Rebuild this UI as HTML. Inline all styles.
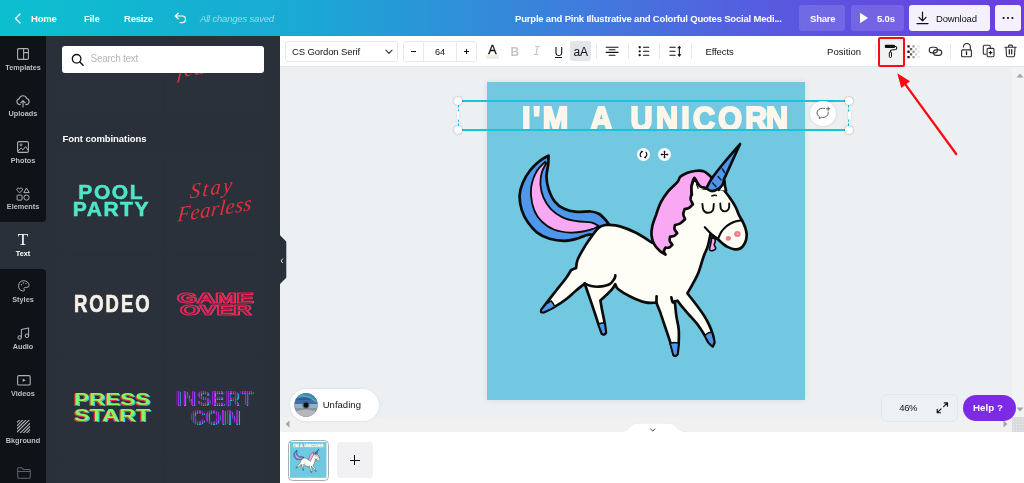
<!DOCTYPE html>
<html lang="en">
<head>
<meta charset="utf-8">
<title>Canva editor</title>
<style>
*{box-sizing:border-box;margin:0;padding:0}
html,body{width:1024px;height:483px;overflow:hidden;background:#fff}
body{font-family:"Liberation Sans",sans-serif;position:relative;color:#0e1318}
body>*{will-change:transform}
.abs{position:absolute}
/* header */
#hdr{left:0;top:0;width:1024px;height:36px;background:linear-gradient(90deg,#0cc0cf 0%,#1aa8d4 30%,#3d7fdc 55%,#5b55e0 78%,#6a3fe0 100%);color:#fff;font-weight:bold;font-size:9.5px;letter-spacing:-.19px}
#hdr .t{position:absolute;top:12px;line-height:13px;white-space:nowrap}
.hbtn{position:absolute;top:5px;height:26px;border-radius:3px;background:rgba(255,255,255,.13)}
/* nav */
#nav{left:0;top:36px;width:46px;height:447px;background:#293039}
.navd{position:absolute;left:0;width:46px;background:#0e1318}
.nl{position:absolute;left:0;width:46px;text-align:center;font-size:7.3px;font-weight:bold;color:#bcbfc3;line-height:9px;white-space:nowrap}
.ni{position:absolute;overflow:visible}
/* panel */
#panel{left:46px;top:36px;width:234px;height:447px;background:#293039;overflow:hidden}
.tile{position:absolute;width:98px;height:97px;border-radius:4px;background:#2a313a}
.fc{position:absolute;font-weight:bold;white-space:nowrap}
.go{font-size:14px;line-height:14px;color:#2b323b;-webkit-text-stroke:1.1px #ea2450;text-shadow:-.7px 0 #c81ccc,.7px 0 #28c6e6}
.ps{font-size:16.8px;line-height:17px;color:#8df65c;text-shadow:-.9px .5px #e0304c,.9px .5px #2ad0e6}
.ic{font-size:20px;line-height:20px;color:#a423da;text-shadow:1.2px .6px #1fb4d8}
.ic::after{content:"";position:absolute;left:-2px;right:-3px;top:0;bottom:0;background:repeating-linear-gradient(90deg,rgba(43,50,59,0) 0 1.3px,rgba(43,50,59,.8) 1.3px 2.3px)}
/* toolbar */
#tb{left:280px;top:36px;width:744px;height:31px;background:#fff;border-bottom:1px solid #e3e6ea}
.box{position:absolute;top:5px;height:21px;border:1px solid #e6e8eb;border-radius:3px;background:#fff}
.tt{position:absolute;top:10px;line-height:12px;font-size:9.5px;white-space:nowrap;color:#0e1318}
.dv{position:absolute;top:7.5px;width:1px;height:15.5px;background:#e6e8eb}
/* canvas */
#cv{left:280px;top:67px;width:744px;height:350px;background:#edf0f3}
#page{left:206.7px;top:15.2px;width:317.9px;height:318.3px;background:#72c8e0;box-shadow:0 0 6px rgba(30,40,50,.10)}
.hd{position:absolute;width:8px;height:8px;margin:.3px;border-radius:50%;background:#fff;box-shadow:0 0 2px rgba(0,0,0,.4)}
/* bottom */
#btm{left:280px;top:431.6px;width:744px;height:51.4px;background:#fff}
</style>
</head>
<body>
<!-- HEADER -->
<div id="hdr" class="abs">
  <svg class="abs" style="left:14px;top:13px" width="8" height="11" viewBox="0 0 8 11"><path d="M6 1 L1.5 5.5 L6 10" fill="none" stroke="#fff" stroke-width="1.3" stroke-linecap="round" stroke-linejoin="round"/></svg>
  <span class="t" style="left:31px">Home</span>
  <span class="t" style="left:84px">File</span>
  <span class="t" style="left:124px">Resize</span>
  <svg class="abs" style="left:174px;top:12px" width="13" height="12" viewBox="0 0 13 12"><path d="M4.2 1.2 L1.2 4 L4.2 6.8 M1.5 4 H8.2 A3.3 3.3 0 0 1 8.2 10.6 H6" fill="none" stroke="#fff" stroke-width="1.2" stroke-linecap="round" stroke-linejoin="round"/></svg>
  <span class="t" style="left:200px;font-weight:normal;font-style:italic;color:rgba(255,255,255,.55)">All changes saved</span>
  <span class="t" style="left:515px">Purple and Pink Illustrative and Colorful Quotes Social Medi...</span>
  <div class="hbtn" style="left:799px;width:46px"><span class="t" style="left:11px;top:7px">Share</span></div>
  <div class="hbtn" style="left:851px;width:53px">
    <svg class="abs" style="left:8px;top:7px" width="10" height="12" viewBox="0 0 10 12"><path d="M1 0.8 L9 6 L1 11.2 Z" fill="#fff"/></svg>
    <span class="t" style="left:26px;top:7px">5.0s</span>
  </div>
  <div class="hbtn" style="left:909px;width:81px;background:#f4f1fd;color:#0e1318">
    <svg class="abs" style="left:7px;top:6px" width="13" height="14" viewBox="0 0 13 14"><path d="M6.5 1 V9.5 M3 6.3 L6.5 9.8 L10 6.3 M1 12.6 H12" fill="none" stroke="#0e1318" stroke-width="1.2" stroke-linecap="round" stroke-linejoin="round"/></svg>
    <span class="t" style="left:27px;top:7px;font-weight:normal">Download</span>
  </div>
  <div class="hbtn" style="left:995px;width:26px;background:#f4f1fd">
    <svg class="abs" style="left:7px;top:11px" width="12" height="4" viewBox="0 0 12 4"><circle cx="1.6" cy="2" r="1.1" fill="#0e1318"/><circle cx="6" cy="2" r="1.1" fill="#0e1318"/><circle cx="10.4" cy="2" r="1.1" fill="#0e1318"/></svg>
  </div>
</div>

<!-- NAV -->
<div id="nav" class="abs">
  <div class="navd" style="top:0;height:186px;border-bottom-right-radius:4px"></div>
  <div class="navd" style="top:233px;height:214px;border-top-right-radius:4px"></div>
    <!-- Templates -->
  <svg class="ni" style="left:17px;top:12px" width="12" height="12" viewBox="0 0 12 12"><rect x="0.6" y="0.6" width="10.8" height="10.8" rx="1.2" fill="none" stroke="#adb1b5" stroke-width="1.1"/><path d="M6.6 0.6 V11.4 M6.6 4.6 H11.4" fill="none" stroke="#adb1b5" stroke-width="1.1"/></svg>
  <div class="nl" style="top:26.5px">Templates</div>
  <!-- Uploads -->
  <svg class="ni" style="left:16px;top:57.5px" width="14" height="14" viewBox="0 0 14 14"><path d="M4.2 10.6 H3.6 A3 3 0 0 1 3.2 4.7 A3.9 3.9 0 0 1 10.7 4.5 A3.1 3.1 0 0 1 10.4 10.6 H9.8" fill="none" stroke="#adb1b5" stroke-width="1.1" stroke-linecap="round"/><path d="M7 13 V7 M4.8 8.9 L7 6.7 L9.2 8.9" fill="none" stroke="#adb1b5" stroke-width="1.1" stroke-linecap="round" stroke-linejoin="round"/></svg>
  <div class="nl" style="top:73px">Uploads</div>
  <!-- Photos -->
  <svg class="ni" style="left:17px;top:104.5px" width="12" height="12" viewBox="0 0 12 12"><rect x="0.6" y="0.6" width="10.8" height="10.8" rx="1.4" fill="none" stroke="#adb1b5" stroke-width="1.1"/><circle cx="4" cy="3.9" r="1" fill="none" stroke="#adb1b5" stroke-width="0.9"/><path d="M0.8 10.4 L4.2 7 L6 8.8 L8.6 5.6 L11.2 9.4" fill="none" stroke="#adb1b5" stroke-width="1" stroke-linejoin="round"/></svg>
  <div class="nl" style="top:119.7px">Photos</div>
  <!-- Elements -->
  <svg class="ni" style="left:16px;top:150.5px" width="14" height="14" viewBox="0 0 14 14"><path d="M3.7 5.6 C1.6 4.2 0.7 3.2 0.9 2.1 C1.1 0.9 2.8 0.6 3.7 1.9 C4.6 0.6 6.3 0.9 6.5 2.1 C6.7 3.2 5.8 4.2 3.7 5.6 Z" fill="none" stroke="#adb1b5" stroke-width="1" stroke-linejoin="round"/><path d="M10.5 1 L13.2 5.6 H7.8 Z" fill="none" stroke="#adb1b5" stroke-width="1" stroke-linejoin="round"/><rect x="1.1" y="8.1" width="5" height="5" rx="0.6" fill="none" stroke="#adb1b5" stroke-width="1"/><circle cx="10.5" cy="10.6" r="2.6" fill="none" stroke="#adb1b5" stroke-width="1"/></svg>
  <div class="nl" style="top:166px">Elements</div>
  <!-- Text -->
  <div class="abs" style="left:0;width:46px;top:195.4px;text-align:center;font-family:'Liberation Serif',serif;font-size:17px;line-height:18px;color:#fff">T</div>
  <div class="nl" style="top:212.5px;color:#fff">Text</div>
  <!-- Styles -->
  <svg class="ni" style="left:17.8px;top:244.4px" width="12" height="12" viewBox="0 0 13 13"><path d="M6.3 0.8 A5.6 5.6 0 0 0 5.2 11.9 C6.9 12.3 7.4 11.2 6.7 10.2 C6 9.1 6.6 8 7.9 8 H9.7 A2.3 2.3 0 0 0 12 5.7 C11.8 2.7 9.3 0.8 6.3 0.8 Z" fill="none" stroke="#adb1b5" stroke-width="1.05" stroke-linejoin="round"/><circle cx="3.7" cy="5.2" r="0.75" fill="#adb1b5"/><circle cx="5.8" cy="3.3" r="0.75" fill="#adb1b5"/><circle cx="8.6" cy="3.7" r="0.75" fill="#adb1b5"/></svg>
  <div class="nl" style="top:259px">Styles</div>
  <!-- Audio -->
  <svg class="ni" style="left:16.5px;top:290.5px" width="13" height="13" viewBox="0 0 13 13"><path d="M4.4 10.2 V2.6 L11.6 0.9 V8.6" fill="none" stroke="#adb1b5" stroke-width="1.05" stroke-linejoin="round" stroke-linecap="round"/><circle cx="2.7" cy="10.4" r="1.7" fill="none" stroke="#adb1b5" stroke-width="1.05"/><circle cx="9.9" cy="8.7" r="1.7" fill="none" stroke="#adb1b5" stroke-width="1.05"/></svg>
  <div class="nl" style="top:305.5px">Audio</div>
  <!-- Videos -->
  <svg class="ni" style="left:16.5px;top:338.5px" width="14" height="11" viewBox="0 0 14 11"><rect x="0.6" y="0.6" width="12.6" height="9.4" rx="1.3" fill="none" stroke="#adb1b5" stroke-width="1.1"/><path d="M5.7 3.5 L8.7 5.3 L5.7 7.1 Z" fill="#adb1b5"/></svg>
  <div class="nl" style="top:353px">Videos</div>
  <!-- Bkground -->
  <svg class="ni" style="left:17px;top:383.5px" width="13" height="13" viewBox="0 0 13 13"><defs><clipPath id="bkc"><rect x="0" y="0" width="13" height="13" rx="1"/></clipPath></defs><g clip-path="url(#bkc)" stroke="#adb1b5" stroke-width="1.1"><path d="M-1 3.5 L3.5 -1 M-1 6.7 L6.7 -1 M-1 9.9 L9.9 -1 M-1 13.1 L13.1 -1 M2.2 14 L14 2.2 M5.4 14 L14 5.4 M8.6 14 L14 8.6 M11.8 14 L14 11.8"/></g></svg>
  <div class="nl" style="top:399.8px">Bkground</div>
  <!-- Folder -->
  <svg class="ni" style="left:16.5px;top:430.5px;opacity:.5" width="14" height="12" viewBox="0 0 14 12"><path d="M0.7 10.3 V1.8 A1 1 0 0 1 1.7 0.8 H4.8 L6.4 2.4 H12.3 A1 1 0 0 1 13.3 3.4 V10.3 A1 1 0 0 1 12.3 11.3 H1.7 A1 1 0 0 1 0.7 10.3 Z M0.7 4.4 H13.3" fill="none" stroke="#adb1b5" stroke-width="1.05" stroke-linejoin="round"/></svg>

</div>

<!-- PANEL -->
<div id="panel" class="abs">
    <!-- hidden-above tiles -->
  <div class="tile" style="left:16.5px;top:-20.7px"></div>
  <div class="tile" style="left:120.3px;top:-20.7px"></div>
  <div class="abs" style="left:131px;top:24px;font:italic 22px/22px 'Liberation Serif',serif;color:#dc2f3c;transform:rotate(-9deg) skewX(-14deg);transform-origin:0 100%;white-space:nowrap;letter-spacing:.4px">fear</div>
  <div class="abs" style="left:0;top:0;width:234px;height:24px;background:#293039"></div>
  <!-- search -->
  <div class="abs" style="left:16px;top:10.3px;width:202.2px;height:26.3px;background:#fff;border-radius:3px"></div>
  <svg class="abs" style="left:25px;top:17px" width="14" height="14" viewBox="0 0 14 14"><circle cx="5.6" cy="5.8" r="4.3" fill="none" stroke="#0e1318" stroke-width="1.3"/><path d="M8.8 9 L12.1 12.3" stroke="#0e1318" stroke-width="1.4" stroke-linecap="round"/></svg>
  <span class="abs" style="left:44.5px;top:17px;font-size:10px;line-height:12px;color:#b3b7bc;letter-spacing:-.29px;white-space:nowrap">Search text</span>
  <div class="abs" style="left:16.5px;top:96.5px;font-size:9.5px;line-height:12px;font-weight:bold;color:#fff;letter-spacing:-.06px;white-space:nowrap">Font combinations</div>
  <!-- row 1 -->
  <div class="tile" style="left:16.5px;top:117px"></div>
  <div class="tile" style="left:120.3px;top:117px"></div>
  <div class="fc" style="left:32.3px;top:145.3px;font-size:21px;line-height:21px;color:#4fe6c6;-webkit-text-stroke:.6px #4fe6c6;letter-spacing:1.6px">POOL</div>
  <div class="fc" style="left:26.8px;top:162.2px;font-size:21px;line-height:21px;color:#4fe6c6;-webkit-text-stroke:.6px #4fe6c6;letter-spacing:1.5px">PARTY</div>
  <div class="abs" style="left:128px;top:140px;width:90px;height:50px;transform:rotate(-9deg);transform-origin:50% 50%">
    <div class="abs" style="left:18px;top:0;font:italic 21px/22px 'Liberation Serif',serif;color:#e0303c;letter-spacing:2.2px;white-space:nowrap;transform:skewX(-14deg)">Stay</div>
    <div class="abs" style="left:2px;top:21px;font:italic 21px/22px 'Liberation Serif',serif;color:#e0303c;letter-spacing:.4px;white-space:nowrap;transform:skewX(-14deg)">Fearless</div>
  </div>
  <!-- row 2 -->
  <div class="tile" style="left:16.5px;top:220.3px"></div>
  <div class="tile" style="left:120.3px;top:220.3px"></div>
  <div class="fc" style="left:27.6px;top:256.1px;font-size:23.7px;line-height:24px;color:#f6f0e7;-webkit-text-stroke:.7px #f6f0e7;letter-spacing:2.5px;transform:scaleX(.78);transform-origin:0 0">RODEO</div>
  <div class="fc go" style="left:130.7px;top:255.4px;transform:scaleX(1.82);transform-origin:0 0">GAME</div>
  <div class="fc go" style="left:133.5px;top:267.3px;transform:scaleX(1.80);transform-origin:0 0">OVER</div>
  <!-- row 3 -->
  <div class="tile" style="left:16.5px;top:323.6px"></div>
  <div class="tile" style="left:120.3px;top:323.6px"></div>
  <div class="fc ps" style="left:27.6px;top:355.2px;transform:scaleX(1.34);transform-origin:0 0">PRESS</div>
  <div class="fc ps" style="left:27.6px;top:371.3px;transform:scaleX(1.395);transform-origin:0 0">START</div>
  <div class="fc ic" style="left:129.2px;top:352px;letter-spacing:.78px">INSERT</div>
  <div class="fc ic" style="left:144.3px;top:370.7px">COIN</div>
  <!-- row 4 -->
  <div class="tile" style="left:16.5px;top:427px"></div>
  <div class="tile" style="left:120.3px;top:427px"></div>

</div>

<!-- TOOLBAR -->
<div id="tb" class="abs">
    <!-- font box -->
  <div class="box" style="left:4.5px;width:113.5px"></div>
  <span class="tt" style="left:12px;letter-spacing:-.11px">CS Gordon Serif</span>
  <svg class="abs" style="left:104.5px;top:13px" width="8" height="6" viewBox="0 0 8 6"><path d="M0.9 1.2 L4 4.4 L7.1 1.2" fill="none" stroke="#2a3036" stroke-width="1.1" stroke-linecap="round" stroke-linejoin="round"/></svg>
  <!-- size box -->
  <div class="box" style="left:122.6px;width:74px"></div>
  <div class="abs" style="left:143px;top:5px;width:1px;height:21px;background:#e8eaed"></div>
  <div class="abs" style="left:176px;top:5px;width:1px;height:21px;background:#e8eaed"></div>
  <div class="abs" style="left:131.3px;top:14.8px;width:5px;height:1.2px;background:#0e1318"></div>
  <span class="tt" style="left:155px;font-size:9.2px">64</span>
  <div class="abs" style="left:183.8px;top:14.8px;width:5.4px;height:1.2px;background:#0e1318"></div>
  <div class="abs" style="left:185.9px;top:12.7px;width:1.2px;height:5.4px;background:#0e1318"></div>
  <!-- A color -->
  <span class="tt" style="left:208.2px;top:7px;font-size:12.5px;line-height:14px;-webkit-text-stroke:.35px #0e1318">A</span>
  <div class="abs" style="left:206px;top:18.8px;width:13px;height:4px;border-radius:1.5px;background:#efeee4"></div>
  <!-- B I U aA -->
  <span class="tt" style="left:230.6px;top:9px;font-size:12px;line-height:14px;font-weight:bold;color:#c3c7cc">B</span>
  <span class="tt" style="left:253px;top:8.6px;font-size:12px;line-height:14px;font-style:italic;font-family:'Liberation Mono',monospace;color:#c3c7cc">I</span>
  <span class="tt" style="left:274.6px;top:9px;font-size:12px;line-height:14px">U</span>
  <div class="abs" style="left:274.6px;top:21.2px;width:7.6px;height:1.1px;background:#0e1318"></div>
  <div class="abs" style="left:290px;top:5px;width:20.6px;height:20px;border-radius:3px;background:#e3e5e8"></div>
  <span class="tt" style="left:293.6px;top:9px;font-size:12px;line-height:14px;letter-spacing:-.2px">aA</span>
  <div class="dv" style="left:316px"></div>
  <!-- align -->
  <svg class="abs" style="left:325px;top:9px" width="14" height="13" viewBox="0 0 14 13"><path d="M1.2 2.25 H13 M4.2 4.8 H10 M1.2 7.4 H13 M4.2 10.2 H10" fill="none" stroke="#0e1318" stroke-width="1.1" stroke-linecap="round"/></svg>
  <div class="dv" style="left:347.6px"></div>
  <!-- list -->
  <svg class="abs" style="left:357px;top:9px" width="14" height="13" viewBox="0 0 14 13"><circle cx="2.7" cy="2.25" r="1.15" fill="#0e1318"/><circle cx="2.7" cy="6.3" r="1.15" fill="#0e1318"/><circle cx="2.7" cy="10.2" r="1.15" fill="#0e1318"/><path d="M6.5 2.25 H11.8 M6.5 6.3 H11.8 M6.5 10.2 H11.8" fill="none" stroke="#0e1318" stroke-width="1.1" stroke-linecap="round"/></svg>
  <div class="dv" style="left:379px"></div>
  <!-- spacing -->
  <svg class="abs" style="left:389px;top:9px" width="14" height="13" viewBox="0 0 14 13"><path d="M0.9 2.25 H6.1 M0.9 6.3 H6.1 M0.9 10.2 H6.1" fill="none" stroke="#0e1318" stroke-width="1.1" stroke-linecap="round"/><path d="M10.35 2 V10.6" stroke="#0e1318" stroke-width="1.1"/><path d="M10.35 0.7 L12.4 3.3 H8.3 Z M10.35 11.9 L12.4 9.3 H8.3 Z" fill="#0e1318"/></svg>
  <div class="dv" style="left:411.3px"></div>
  <span class="tt" style="left:425.4px;letter-spacing:-.07px">Effects</span>
  <span class="tt" style="left:547px;letter-spacing:.05px">Position</span>
  <div class="dv" style="left:594.5px"></div>
  <!-- red box + roller -->
  <div class="abs" style="left:597.9px;top:0.6px;width:26.8px;height:30.2px;border:2.8px solid #fb0a12;border-radius:2px;background:#f2f2f2"></div>
  <svg class="abs" style="left:604px;top:8px" width="14" height="15" viewBox="0 0 14 15"><rect x="0.8" y="0.8" width="10.2" height="3.2" rx="1" fill="#0e1318"/><path d="M11 2.4 H11.6 A1.1 1.1 0 0 1 12.7 3.5 V4.3 A1.2 1.2 0 0 1 11.7 5.5 L7.4 6.1 A1.1 1.1 0 0 0 6.4 7.2 V7.8" fill="none" stroke="#0e1318" stroke-width="1.05" stroke-linecap="round"/><rect x="5.3" y="7.9" width="2.2" height="5.6" rx="1.1" fill="none" stroke="#0e1318" stroke-width="1"/></svg>
  <!-- transparency -->
  <svg class="abs" style="left:626.5px;top:8.5px" width="14" height="14" viewBox="0 0 14 14">
    <g>
      <rect x="0.4" y="0.3" width="2.3" height="2.3" rx=".5" fill="#0e1318"/><rect x="0.4" y="5.6" width="2.3" height="2.3" rx=".5" fill="#0e1318"/><rect x="0.4" y="10.9" width="2.3" height="2.3" rx=".5" fill="#0e1318"/>
      <rect x="2.9" y="2.9" width="2.3" height="2.3" rx=".5" fill="#5a5e63"/><rect x="2.9" y="8.2" width="2.3" height="2.3" rx=".5" fill="#5a5e63"/>
      <rect x="5.4" y="0.3" width="2.3" height="2.3" rx=".5" fill="#9a9da1"/><rect x="5.4" y="5.6" width="2.3" height="2.3" rx=".5" fill="#9a9da1"/><rect x="5.4" y="10.9" width="2.3" height="2.3" rx=".5" fill="#9a9da1"/>
      <rect x="7.9" y="2.9" width="2.3" height="2.3" rx=".5" fill="#cdcfd2"/><rect x="7.9" y="8.2" width="2.3" height="2.3" rx=".5" fill="#cdcfd2"/>
      <rect x="10.4" y="0.3" width="2.3" height="2.3" rx=".5" fill="#e6e7e9"/><rect x="10.4" y="5.6" width="2.3" height="2.3" rx=".5" fill="#e6e7e9"/><rect x="10.4" y="10.9" width="2.3" height="2.3" rx=".5" fill="#e6e7e9"/>
    </g>
  </svg>
  <!-- link -->
  <svg class="abs" style="left:648px;top:10px" width="15" height="11" viewBox="0 0 15 11"><rect x="1.2" y="1.2" width="8.3" height="5.6" rx="2.8" fill="none" stroke="#2a2e33" stroke-width="1.15"/><rect x="5.4" y="3.8" width="8.3" height="5.6" rx="2.8" fill="none" stroke="#2a2e33" stroke-width="1.15"/></svg>
  <div class="dv" style="left:670.3px"></div>
  <!-- lock -->
  <svg class="abs" style="left:680px;top:6.5px" width="13" height="15" viewBox="0 0 13 15"><rect x="1.6" y="6.9" width="9.8" height="6.8" rx="1" fill="none" stroke="#2a2e33" stroke-width="1.1"/><path d="M3.4 4 V3.9 A3.5 3.5 0 0 1 10.4 3.9 V6.8" fill="none" stroke="#2a2e33" stroke-width="1.1" stroke-linecap="round"/><path d="M6.5 8.8 V11.6" stroke="#0e1318" stroke-width="1.3" stroke-linecap="round"/></svg>
  <!-- copy -->
  <svg class="abs" style="left:702px;top:8px" width="13" height="14" viewBox="0 0 13 14"><path d="M4.4 10.3 H2.6 A1.3 1.3 0 0 1 1.3 9 V2.6 A1.3 1.3 0 0 1 2.6 1.3 H7 A1.3 1.3 0 0 1 8.3 2.6 V3.9" fill="none" stroke="#2a2e33" stroke-width="1.1"/><rect x="5.1" y="4.4" width="6.9" height="8.3" rx="1.2" fill="#fff" stroke="#2a2e33" stroke-width="1.1"/><path d="M8.55 7.2 V10 M7.15 8.6 H9.95" stroke="#0e1318" stroke-width="1.1" stroke-linecap="round"/></svg>
  <!-- trash -->
  <svg class="abs" style="left:723.8px;top:8px" width="13" height="14" viewBox="0 0 13 14"><path d="M0.8 3.2 H12.2 M4.6 3 V1.9 A0.8 0.8 0 0 1 5.4 1.1 H7.6 A0.8 0.8 0 0 1 8.4 1.9 V3" fill="none" stroke="#2a2e33" stroke-width="1.1" stroke-linecap="round"/><path d="M2 3.4 L2.5 11.6 A1.1 1.1 0 0 0 3.6 12.7 H9.4 A1.1 1.1 0 0 0 10.5 11.6 L11 3.4" fill="none" stroke="#2a2e33" stroke-width="1.1"/><path d="M5.3 5.5 V10 M7.7 5.5 V10" stroke="#0e1318" stroke-width="1.15" stroke-linecap="round"/></svg>

</div>

<!-- h scrollbar -->
<div class="abs" style="left:280px;top:417px;width:744px;height:14.6px;background:#f1f1f2"></div>
<svg class="abs" style="left:284.5px;top:419.8px" width="5" height="8" viewBox="0 0 5 8"><path d="M4.5 0.5 L0.6 4 L4.5 7.5 Z" fill="#a3a5a8"/></svg>
<svg class="abs" style="left:1002.5px;top:419.8px" width="5" height="8" viewBox="0 0 5 8"><path d="M0.5 0.5 L4.4 4 L0.5 7.5 Z" fill="#a3a5a8"/></svg>
<div class="abs" style="left:1012px;top:417px;width:12px;height:14.6px;background-color:#d9dadb;background-image:radial-gradient(circle,#e9eaeb .7px,rgba(233,234,235,0) .9px);background-size:3px 3px"></div>
<!-- CANVAS -->
<div id="cv" class="abs">
  <div id="page" class="abs">
    <!--PAGE-START-->
    <div class="abs" id="ttl" style="left:35.1px;top:20px;font-size:32.6px;line-height:34px;font-weight:bold;color:#fdf6ea;-webkit-text-stroke:2.1px #fdf6ea;letter-spacing:2.64px;word-spacing:6.43px;white-space:nowrap;transform:scaleX(.938);transform-origin:0 0">I'M <span style="margin-left:2.7px">A</span> <span style="letter-spacing:3.45px">UNICOR</span><span style="margin-left:-4.9px">N</span></div>
    <svg class="abs" style="left:0;top:0" width="317.9" height="318.3" viewBox="0 0 317.9 318.3">
<g id="uni" transform="translate(-486.7 -82.2)">
<path d="M600.0 236.0 C598.3 235.8 592.3 234.8 589.7 234.8 C587.1 234.8 586.7 235.2 584.5 235.9 C582.3 236.6 579.8 238.1 576.3 239.0 C572.8 239.9 568.3 241.1 563.8 241.1 C559.3 241.1 553.8 240.4 549.3 239.0 C544.8 237.6 540.5 235.6 536.9 232.8 C533.3 230.1 530.2 226.3 527.6 222.5 C525.0 218.7 522.8 214.5 521.4 210.0 C520.0 205.5 519.1 200.0 519.3 195.5 C519.5 191.0 520.7 187.2 522.4 183.1 C524.1 179.0 526.9 174.3 529.7 170.7 C532.5 167.1 535.9 163.9 539.0 161.4 C542.1 158.9 546.8 156.7 548.3 155.8 C548.2 157.2 548.2 161.0 547.9 164.5 C547.5 168.0 546.1 172.8 546.2 176.9 C546.3 181.0 546.9 185.2 548.3 189.3 C549.7 193.5 551.9 198.5 554.5 201.8 C557.1 205.1 560.2 207.3 563.8 209.0 C567.4 210.7 571.8 211.7 576.3 212.1 C580.8 212.5 586.9 211.3 590.7 211.7 C594.5 212.0 596.4 212.6 599.0 214.2 C601.6 215.8 604.1 218.8 606.3 221.4 C608.5 224.0 611.0 228.6 612.0 230.0 Z" fill="#4e97ea" stroke="#0b0b0b" stroke-width="2.7" stroke-linejoin="round" stroke-linecap="round"/>
<path d="M544.8 162.0 C543.5 163.5 539.1 167.2 536.9 170.7 C534.7 174.2 532.8 179.0 531.7 183.1 C530.7 187.3 530.4 191.1 530.7 195.5 C531.0 200.0 532.1 205.7 533.8 210.0 C535.5 214.4 537.8 218.2 541.1 221.4 C544.3 224.7 548.6 227.8 553.5 229.7 C558.3 231.6 564.9 232.5 570.0 232.8 C575.2 233.1 580.6 232.1 584.5 231.4 C588.5 230.7 592.3 229.1 593.9 228.7 C594.6 228.3 597.8 226.6 598.6 226.2 C597.3 225.6 594.5 223.3 590.7 222.5 C587.0 221.7 581.1 222.3 576.3 221.4 C571.4 220.6 566.1 219.4 561.8 217.3 C557.4 215.2 553.5 212.3 550.4 209.0 C547.3 205.7 544.8 201.6 543.1 197.6 C541.4 193.7 540.5 189.3 540.2 185.2 C540.0 181.1 540.5 176.4 541.5 172.8 C542.4 169.1 545.3 164.8 546.0 163.3 C545.8 163.0 545.0 162.2 544.8 162.0 Z" fill="#f9a9f3" stroke="#0b0b0b" stroke-width="1.8" stroke-linejoin="round" stroke-linecap="round"/>
<path d="M711.2 238.0 C711.8 238.1 713.9 238.3 714.5 239.0 C715.1 239.7 715.0 240.9 714.9 241.9 C714.8 242.9 713.8 243.9 713.9 245.0 C714.0 246.1 715.7 247.7 715.4 248.6 C715.2 249.6 713.3 250.6 712.2 250.8 C711.2 251.0 709.7 250.7 709.3 249.8 C709.0 248.8 709.9 246.5 710.2 245.0 C710.4 243.5 710.8 242.0 711.0 240.9 C711.2 239.7 711.2 238.4 711.2 238.0 Z" fill="#f9a9f3" stroke="#0b0b0b" stroke-width="1.6" stroke-linejoin="round"/>
<path d="M606.4 224.9 C608.6 225.2 614.7 225.2 619.7 226.6 C624.7 228.0 630.8 230.5 636.2 233.2 C641.6 235.9 649.4 241.4 652.0 243.0 C655.0 240.0 664.5 232.2 670.0 225.0 C675.5 217.8 681.5 206.0 685.0 200.0 C688.5 194.0 690.0 190.8 691.0 189.0 C692.5 188.6 696.5 186.8 700.0 186.5 C703.5 186.2 708.1 187.0 712.0 187.5 C715.9 188.0 721.3 189.3 723.2 189.7 C724.5 191.3 728.7 196.6 730.7 199.6 C732.8 202.6 734.2 204.9 735.5 207.5 C736.8 210.1 737.4 212.6 738.6 215.0 C739.8 217.4 741.4 219.8 742.5 222.0 C743.6 224.2 744.6 226.2 745.2 228.5 C745.9 230.8 746.5 233.3 746.4 235.7 C746.3 238.1 745.8 240.8 744.8 242.9 C743.8 245.0 742.4 247.1 740.7 248.2 C739.0 249.3 736.8 249.8 734.5 249.6 C732.2 249.4 729.3 248.1 727.2 247.1 C725.1 246.1 723.6 244.7 722.0 243.4 C720.4 242.1 719.4 240.9 717.4 239.3 C715.4 237.8 711.4 235.0 710.2 234.1 C709.8 236.1 708.7 242.3 707.6 246.0 C706.5 249.7 705.0 252.0 703.4 256.4 C701.8 260.8 700.2 267.7 698.3 272.4 C696.4 277.1 694.0 281.3 692.1 284.8 C690.2 288.3 687.9 292.1 687.1 293.5 C688.5 295.4 692.9 300.8 695.8 304.7 C698.7 308.6 702.0 313.0 704.5 317.1 C707.0 321.2 709.1 325.4 710.7 329.5 C712.3 333.6 713.7 339.0 714.0 341.9 C714.3 344.8 712.7 345.8 712.4 346.6 C711.8 346.0 709.8 344.8 708.5 343.0 C707.2 341.2 706.4 338.8 704.5 335.7 C702.6 332.6 699.8 328.0 697.1 324.5 C694.4 321.0 691.1 317.7 688.4 314.6 C685.7 311.5 682.8 308.2 680.9 305.9 C679.0 303.6 677.8 301.7 677.2 300.9 C676.8 301.0 675.0 301.4 674.5 301.5 C674.8 303.9 675.4 311.1 676.0 315.8 C676.6 320.5 678.0 324.9 678.4 329.5 C678.8 334.1 678.6 339.1 678.4 343.2 C678.2 347.3 677.4 352.4 677.2 354.3 C676.9 354.6 675.9 355.8 675.3 356.0 C674.6 356.2 673.6 355.5 673.3 355.4 C672.7 353.1 671.2 346.6 669.8 341.9 C668.4 337.2 666.5 332.0 664.8 327.0 C663.1 322.0 661.2 316.1 659.8 312.1 C658.3 308.1 656.7 304.4 656.1 302.9 C654.3 302.8 649.6 303.6 645.3 302.6 C641.0 301.6 634.9 299.1 630.4 296.9 C625.9 294.7 620.6 291.5 618.0 289.4 C615.4 287.3 615.5 285.2 615.0 284.4 C614.5 285.2 613.4 287.5 611.8 289.4 C610.2 291.3 607.5 293.7 605.6 295.6 C603.7 297.5 601.0 299.8 600.1 300.6 C600.4 302.2 601.1 306.8 601.8 310.5 C602.5 314.2 603.7 319.3 604.3 323.0 C604.9 326.7 605.4 331.2 605.6 332.9 C605.3 333.2 604.5 334.4 603.8 334.6 C603.1 334.8 602.0 334.0 601.6 333.9 C601.0 332.3 599.3 327.7 598.1 324.2 C596.9 320.7 595.9 317.4 594.4 313.0 C592.9 308.6 591.1 303.0 589.4 298.1 C587.7 293.2 585.2 286.1 584.4 283.7 C583.0 284.9 578.9 288.1 575.8 290.7 C572.7 293.3 569.3 296.7 565.8 299.4 C562.3 302.1 558.3 304.6 554.6 306.8 C550.9 309.0 545.4 311.6 543.5 312.5 C543.1 312.4 541.4 312.6 541.0 312.2 C540.6 311.8 541.0 310.5 541.0 310.2 C542.0 308.8 544.7 305.1 547.2 301.8 C549.7 298.6 552.8 294.6 555.9 290.7 C559.0 286.8 563.3 281.6 565.8 278.2 C568.3 274.8 570.0 271.6 570.8 270.3 C571.6 270.0 575.0 268.6 575.8 268.3 C576.0 267.1 576.0 263.7 577.0 260.8 C578.0 257.9 580.1 254.2 582.0 250.9 C583.9 247.6 585.5 244.8 588.2 241.0 C590.9 237.2 595.2 230.9 598.2 228.2 C601.2 225.5 605.0 225.4 606.4 224.9 Z" fill="#fffef6" stroke="#0b0b0b" stroke-width="2.7" stroke-linejoin="round" stroke-linecap="round"/>
<path d="M584.4 283.7 C585.3 284.1 587.7 285.5 590.0 286.0 C592.3 286.5 594.9 287.2 598.1 286.9 C601.3 286.6 606.6 285.8 609.3 284.4 C612.0 283.0 613.3 280.0 614.3 278.5 C615.2 277.0 614.9 276.0 615.0 275.5" fill="none" stroke="#0b0b0b" stroke-width="2.7" stroke-linejoin="round" stroke-linecap="round"/>
<path d="M656.3 296.5 C656.3 297.6 656.1 301.8 656.1 302.9" fill="none" stroke="#0b0b0b" stroke-width="2.7" stroke-linejoin="round" stroke-linecap="round"/>
<path d="M671.0 297.5 C671.2 298.3 671.9 301.8 672.5 302.5 C673.1 303.2 674.2 301.7 674.5 301.5" fill="none" stroke="#0b0b0b" stroke-width="2.7" stroke-linejoin="round" stroke-linecap="round"/>
<path d="M541.0 310.2 L546.0 304.0 L550.9 301.1 L553.0 304.0 L554.6 306.8 L549.0 310.0 L543.5 312.5 L541.0 312.2 Z" fill="#4e97ea" stroke="#0b0b0b" stroke-width="1.5" stroke-linejoin="round" stroke-linecap="round"/>
<path d="M598.1 324.2 L601.5 323.2 L604.3 323.0 L605.6 332.9 L603.8 334.6 L601.6 333.9 Z" fill="#4e97ea" stroke="#0b0b0b" stroke-width="1.5" stroke-linejoin="round" stroke-linecap="round"/>
<path d="M669.8 343.4 L674.0 342.6 L678.4 343.2 L677.2 354.3 L675.3 356.0 L673.3 355.4 Z" fill="#4e97ea" stroke="#0b0b0b" stroke-width="1.5" stroke-linejoin="round" stroke-linecap="round"/>
<path d="M704.5 335.7 L708.0 333.0 L711.6 332.5 L714.0 341.9 L712.4 346.6 L708.5 343.0 Z" fill="#4e97ea" stroke="#0b0b0b" stroke-width="1.5" stroke-linejoin="round" stroke-linecap="round"/>
<path d="M711.6 178.6 C711.2 178.1 710.4 176.7 709.0 175.5 C707.6 174.3 705.6 172.1 703.2 171.4 C700.8 170.7 697.2 170.9 694.5 171.2 C691.8 171.5 689.6 172.0 687.2 173.0 C684.8 174.0 681.7 175.5 680.0 177.0 C678.3 178.5 679.3 179.7 677.3 182.1 C675.3 184.5 670.8 188.0 668.0 191.4 C665.2 194.9 662.5 198.7 660.5 202.6 C658.5 206.5 657.2 210.9 655.9 214.8 C654.5 218.6 652.9 222.5 652.1 225.9 C651.3 229.4 650.9 232.2 651.2 235.3 C651.5 238.4 652.6 242.0 654.0 244.6 C655.4 247.2 657.7 249.4 659.6 251.1 C661.4 252.8 664.2 254.2 665.2 254.8 C664.9 254.3 663.6 252.5 663.6 251.4 C663.6 250.2 664.9 248.5 665.2 247.9 C665.8 247.9 667.8 248.2 668.9 247.7 C670.1 247.2 671.5 245.4 672.1 245.0 C671.6 244.3 669.7 242.2 669.4 240.9 C669.0 239.5 669.8 237.4 669.8 236.8 C670.5 236.7 672.5 236.8 673.7 236.3 C674.9 235.7 676.4 233.9 676.9 233.4 C676.5 232.7 674.6 230.7 674.2 229.3 C673.8 227.9 674.6 225.9 674.7 225.2 C675.6 224.9 678.3 224.5 680.0 223.5 C681.7 222.5 684.0 220.1 684.8 219.4 C684.5 218.6 683.0 216.0 683.0 214.3 C682.9 212.6 684.1 210.0 684.4 209.2 C685.1 209.0 687.4 208.8 688.8 208.0 C690.2 207.3 692.0 205.1 692.6 204.5 C692.2 203.6 690.6 201.1 690.3 199.4 C690.1 197.7 691.1 195.1 691.3 194.2 C691.3 193.0 690.8 189.4 691.3 186.8 C691.8 184.2 692.7 178.2 694.1 178.4 C695.5 178.6 698.0 186.0 699.7 187.7 C701.4 189.4 702.3 188.5 704.3 188.6 C706.3 188.7 710.4 189.7 711.6 188.0 C712.8 186.3 711.6 180.2 711.6 178.6 Z" fill="#f9a9f3" stroke="#0b0b0b" stroke-width="2.7" stroke-linejoin="round" stroke-linecap="round"/>
<path d="M691.6 195.0 C691.5 193.6 690.8 189.6 691.2 186.8 C691.6 184.0 693.6 179.6 694.1 178.2 C694.6 179.1 696.2 182.0 697.2 183.4 C698.2 184.8 698.9 186.0 700.3 186.8 C701.7 187.6 704.5 187.8 705.4 188.0" fill="#fffef6" stroke="#0b0b0b" stroke-width="2.7" stroke-linejoin="round" stroke-linecap="round"/>
<path d="M696.2 184.2 C696.5 184.9 697.5 187.7 697.8 188.4" fill="none" stroke="#0b0b0b" stroke-width="1.3" stroke-linejoin="round" stroke-linecap="round"/>
<path d="M718.5 190.0 C718.9 189.2 720.0 186.5 721.0 185.0 C722.0 183.5 723.8 181.8 724.3 181.2 C724.3 182.0 724.4 184.4 724.6 186.0 C724.9 187.6 725.6 190.0 725.8 190.8" fill="#fffef6" stroke="#0b0b0b" stroke-width="2.7" stroke-linejoin="round" stroke-linecap="round"/>
<path d="M706.1 188.6 C707.0 187.0 708.3 183.3 711.2 179.1 C714.1 174.9 718.7 169.0 723.5 163.2 C728.3 157.4 737.1 147.4 739.8 144.2 C737.1 150.1 726.3 173.9 723.6 179.8 C723.4 180.6 723.2 183.3 722.3 184.8 C721.4 186.3 720.2 187.7 718.4 188.8 C716.6 189.9 713.6 191.4 711.6 191.4 C709.6 191.4 707.0 189.1 706.1 188.6 Z" fill="#4f96ec" stroke="#0b0b0b" stroke-width="2.7" stroke-linejoin="round" stroke-linecap="round"/>
<path d="M722.0 169.0 L724.3 172.7" fill="none" stroke="#10203a" stroke-width="1.5" stroke-linejoin="round" stroke-linecap="round"/>
<path d="M717.8 176.8 L720.6 180.0" fill="none" stroke="#10203a" stroke-width="1.5" stroke-linejoin="round" stroke-linecap="round"/>
<path d="M712.4 183.3 L715.6 186.8" fill="none" stroke="#10203a" stroke-width="1.5" stroke-linejoin="round" stroke-linecap="round"/>
<path d="M702.1 204.1 C702.3 205.1 702.2 208.6 703.1 210.1 C704.0 211.6 706.0 213.0 707.6 213.0 C709.2 213.1 711.6 212.0 712.5 210.6 C713.5 209.1 713.4 205.2 713.5 204.1" fill="none" stroke="#0b0b0b" stroke-width="1.9" stroke-linejoin="round" stroke-linecap="round"/>
<path d="M720.0 203.6 C720.1 204.5 720.0 207.7 720.7 209.1 C721.5 210.4 723.2 211.6 724.5 211.6 C725.8 211.6 727.7 210.4 728.4 209.1 C729.2 207.7 728.9 204.5 728.9 203.6" fill="none" stroke="#0b0b0b" stroke-width="1.9" stroke-linejoin="round" stroke-linecap="round"/>
<path d="M711.6 196.1 C711.9 196.0 713.0 195.5 713.8 195.4 C714.5 195.3 715.7 195.6 716.0 195.7" fill="none" stroke="#0b0b0b" stroke-width="1.5" stroke-linejoin="round" stroke-linecap="round"/>
<path d="M741.6 220.5 C740.2 220.8 736.0 221.2 733.4 222.2 C730.8 223.2 728.3 224.8 726.2 226.4 C724.1 228.1 722.3 230.2 721.0 232.1 C719.7 234.0 718.7 237.0 718.2 238.0" fill="none" stroke="#0b0b0b" stroke-width="2.1" stroke-linejoin="round" stroke-linecap="round"/>
<path d="M704.5 227.4 C705.5 228.4 708.2 231.6 710.4 233.6 C712.5 235.6 716.2 238.4 717.4 239.3" fill="none" stroke="#0b0b0b" stroke-width="2.1" stroke-linejoin="round" stroke-linecap="round"/>
<ellipse cx="737.1" cy="234.1" rx="3.3" ry="3" fill="#f57c86"/>
<ellipse cx="728.1" cy="238.6" rx="2.6" ry="2.3" fill="#f57c86"/>
<ellipse cx="737.3" cy="234.2" rx="1" ry=".9" fill="#fbb9bd"/>
</g>
    </svg>
<!--PAGE-END-->
  </div>
    <!-- selection box (cv-relative: abs x-280, y-67) -->
  <div class="abs" style="left:177.9px;top:33.1px;width:391.4px;height:31.2px;border:2px solid #14c6da;border-left:1.2px dashed #14c6da;border-right:1.2px dashed #14c6da"></div>
  <div class="hd" style="left:173.7px;top:29.7px"></div>
  <div class="hd" style="left:173.7px;top:59.2px"></div>
  <div class="hd" style="left:565px;top:29.4px"></div>
  <div class="hd" style="left:565px;top:59.2px"></div>
  <div class="abs" style="left:176.6px;top:43.6px;width:2.6px;height:9.6px;margin-left:.3px;border-radius:2px;background:#fff;box-shadow:0 0 1.2px rgba(0,0,0,.3)"></div>
  <div class="abs" style="left:567.8px;top:43.6px;width:2.6px;height:9.6px;margin-left:.3px;border-radius:2px;background:#fff;box-shadow:0 0 1.2px rgba(0,0,0,.3)"></div>
  <!-- comment button -->
  <div class="abs" style="left:530px;top:33.6px;width:25.8px;height:25.8px;border-radius:50%;background:#fff;box-shadow:0 0 3px rgba(40,50,60,.18)"></div>
  <svg class="abs" style="left:535px;top:39px" width="16" height="15" viewBox="0 0 16 15"><path d="M9.6 2.6 C8.9 2.4 8.3 2.3 7.6 2.3 C4.4 2.3 2 4.3 2 6.9 C2 8.5 3 9.9 4.5 10.7 L4.3 12.7 L6.4 11.4 C6.8 11.5 7.2 11.5 7.6 11.5 C10.8 11.5 13.2 9.5 13.2 6.9 C13.2 6.6 13.2 6.3 13.1 6" fill="none" stroke="#5d6268" stroke-width="1" stroke-linecap="round" stroke-linejoin="round"/><path d="M13.2 1.1 V4.5 M11.5 2.8 H14.9" stroke="#5d6268" stroke-width="1" stroke-linecap="round"/></svg>
  <!-- rotate / move -->
  <div class="abs" style="left:356.6px;top:80.8px;width:13px;height:13px;border-radius:50%;background:#fff"></div>
  <svg class="abs" style="left:358.6px;top:82.8px" width="9" height="9" viewBox="0 0 9 9"><path d="M2.3 7.1 A3.4 3.4 0 0 1 2.5 1.9 M6.7 1.9 A3.4 3.4 0 0 1 6.5 7.1" fill="none" stroke="#14181d" stroke-width="1.25"/><path d="M1.6 0.5 L4.3 1.2 L2.5 3.3 Z M7.4 8.5 L4.7 7.8 L6.5 5.7 Z" fill="#14181d"/></svg>
  <div class="abs" style="left:377.5px;top:80.8px;width:13px;height:13px;border-radius:50%;background:#fff"></div>
  <svg class="abs" style="left:379.5px;top:82.8px" width="9" height="9" viewBox="0 0 9 9"><path d="M4.5 1.8 V7.2 M1.8 4.5 H7.2" stroke="#14181d" stroke-width="1"/><path d="M4.5 0.4 L6 2.3 H3 Z M4.5 8.6 L6 6.7 H3 Z M0.4 4.5 L2.3 3 V6 Z M8.6 4.5 L6.7 3 V6 Z" fill="#14181d"/></svg>
  <!-- vertical scrollbar -->
  <div class="abs" style="left:732px;top:0;width:12px;height:350px;background:#f1f3f5"></div>
  <svg class="abs" style="left:735.5px;top:6px" width="8" height="5" viewBox="0 0 8 5"><path d="M0.5 4.5 L4 0.6 L7.5 4.5 Z" fill="#a3a5a8"/></svg>
  <svg class="abs" style="left:735.5px;top:339.5px" width="8" height="5" viewBox="0 0 8 5"><path d="M0.5 0.5 L4 4.4 L7.5 0.5 Z" fill="#a3a5a8"/></svg>
  <!-- Unfading pill -->
  <div class="abs" style="left:9.6px;top:322px;width:89.6px;height:32px;border-radius:16px;background:#fff;box-shadow:0 0 3px rgba(40,50,60,.12)"></div>
  <svg class="abs" style="left:13.8px;top:326.4px" width="24" height="24" viewBox="0 0 24 24"><defs><clipPath id="avc"><circle cx="12" cy="12" r="11.7"/></clipPath></defs><g clip-path="url(#avc)"><rect width="24" height="24" fill="#3f6ea2"/><rect y="0" width="24" height="7" fill="#2c5d96"/><path d="M-2 9 Q12 -2 26 12 V0 H-2 Z" fill="#4a86b8"/><rect y="11" width="24" height="5" fill="#8fb3cf"/><rect y="15" width="24" height="9" fill="#8d949c"/><path d="M0 19 Q12 14 24 19 V24 H0 Z" fill="#b4b8bd"/><path d="M2 3 Q14 1 22 9" fill="none" stroke="#55b3a8" stroke-width="1.2"/></g><circle cx="12" cy="12.2" r="2.6" fill="#0b0d10"/><circle cx="12" cy="12.2" r="3.4" fill="none" stroke="#2a3f58" stroke-width=".6" opacity=".7"/></svg>
  <span class="abs" style="left:42.7px;top:332.3px;font-size:9.5px;line-height:12px;white-space:nowrap;color:#0e1318;letter-spacing:.03px">Unfading</span>
  <!-- zoom box -->
  <div class="abs" style="left:601.3px;top:326.5px;width:76.4px;height:28px;border:1px solid #e3e6e9;border-radius:6px;background:#eef1f4"></div>
  <span class="abs" style="left:619.3px;top:334.8px;font-size:9.5px;line-height:12px;white-space:nowrap;color:#0e1318;letter-spacing:-.4px">46%</span>
  <svg class="abs" style="left:655.5px;top:335px" width="13" height="12" viewBox="0 0 13 12"><path d="M7.6 4.6 L11.4 0.9 M8.2 0.9 H11.5 V4.2 M5 6.9 L1.3 10.6 M1.2 7.3 V10.7 H4.6" fill="none" stroke="#0e1318" stroke-width="1.15" stroke-linecap="round" stroke-linejoin="round"/></svg>

</div>

<!-- BOTTOM -->
<div id="btm" class="abs">
  <div class="abs" style="left:7.5px;top:7.8px;width:41.5px;height:41px;border:1.5px solid #a9adb3;border-radius:4.5px;background:#fff"></div>
  <svg class="abs" style="left:10px;top:10.4px" width="36.5" height="35.8" viewBox="0 0 319 319" preserveAspectRatio="none"><rect width="319" height="319" fill="#72c8e0"/><text x="159.5" y="48.5" text-anchor="middle" font-family="Liberation Sans, sans-serif" font-size="34" font-weight="bold" fill="#fdf6ea" stroke="#fdf6ea" stroke-width="3" textLength="262" lengthAdjust="spacing">I'M A UNICORN</text><use href="#uni"/></svg>
  <div class="abs" style="left:56.5px;top:10.4px;width:36.7px;height:36.1px;border-radius:3px;background:#f1f1f3"></div>
  <div class="abs" style="left:69.5px;top:27.7px;width:10.4px;height:1.2px;background:#0e1318"></div>
  <div class="abs" style="left:74.1px;top:23.1px;width:1.2px;height:10.4px;background:#0e1318"></div>

</div>
<!-- pages tab -->
<svg class="abs" style="left:620px;top:423px" width="66" height="9" viewBox="0 0 66 9"><path d="M0 9 C9 9 10 0.3 17 0.3 H49 C56 0.3 57 9 66 9 Z" fill="#fff"/><path d="M0 8.8 C9 8.8 10 0.3 17 0.3 H49 C56 0.3 57 8.8 66 8.8" fill="none" stroke="#e3e6ea" stroke-width=".6"/><path d="M30.6 6 L32.8 8 L35 6" fill="none" stroke="#3a3f45" stroke-width="1" stroke-linecap="round" stroke-linejoin="round"/></svg>
<!-- help -->
<div class="abs" style="left:962.5px;top:394.6px;width:53.1px;height:26px;border-radius:13px;background:#7c2ae6"></div>
<span class="abs" style="left:973px;top:401.6px;font-size:9.7px;line-height:12px;font-weight:bold;color:#fff;white-space:nowrap;letter-spacing:.05px">Help&nbsp;?</span>
<!-- panel collapse handle -->
<svg class="abs" style="left:279.5px;top:235px" width="8" height="50" viewBox="0 0 8 50"><path d="M0 0 L0.5 0.8 L5.2 5.6 A2 2 0 0 1 6.3 7.6 V41.8 A2 2 0 0 1 5.2 43.8 L0.5 48.6 L0 49.4 Z" fill="#293039"/><path d="M2.6 24 L1 25.9 L2.6 27.8" fill="none" stroke="#fff" stroke-width=".85" stroke-linecap="round" stroke-linejoin="round"/></svg>
<!-- red arrow -->
<svg class="abs" style="left:880px;top:60px" width="100" height="110" viewBox="880 60 100 110"><path d="M956.2 154 L903.5 81.9" stroke="#fb0a12" stroke-width="2.3" stroke-linecap="round"/><path d="M897.2 73.3 L910 81.3 L901.3 88 Z" fill="#fb0a12"/></svg>

</body>
</html>
